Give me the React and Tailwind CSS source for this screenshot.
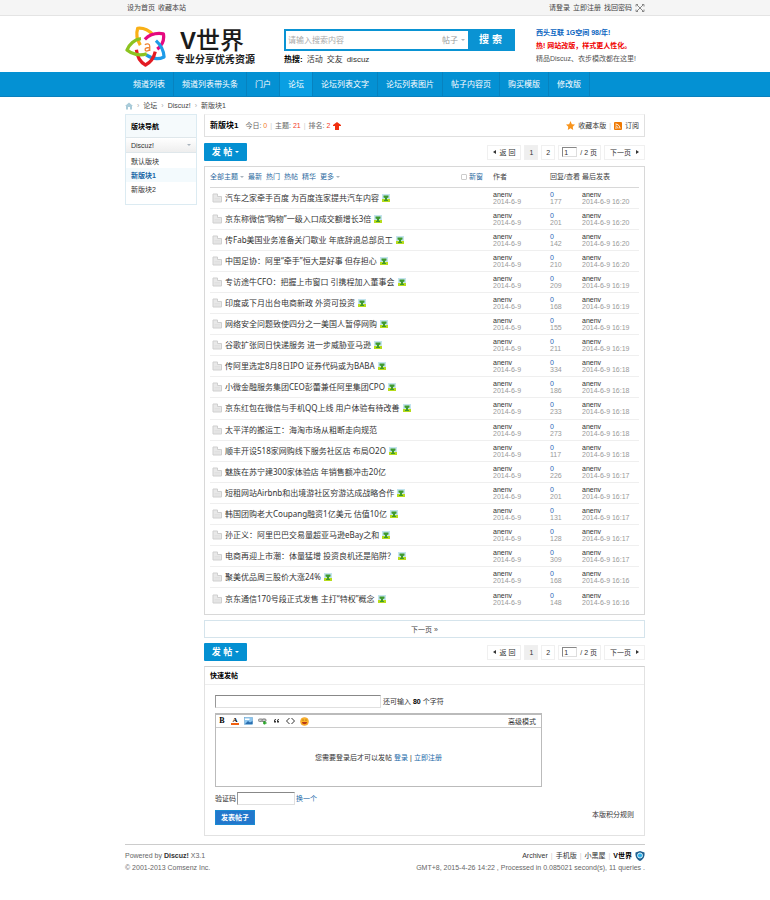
import React from "react";

const navItems = [
  "频道列表",
  "频道列表带头条",
  "门户",
  "论坛",
  "论坛列表文字",
  "论坛列表图片",
  "帖子内容页",
  "购买模版",
  "修改版",
];

const threads = [
  ["汽车之家牵手百度 为百度连家提共汽车内容", 177, "16:20", true],
  ["京东称微信“购物”一级入口成交额增长3倍", 201, "16:20", true],
  ["传Fab美国业务准备关门歇业 年底辞退总部员工", 142, "16:20", true],
  ["中国足协：阿里“牵手”恒大是好事 但存担心", 210, "16:20", true],
  ["专访途牛CFO：把握上市窗口 引携程加入董事会", 209, "16:19", true],
  ["印度或下月出台电商新政 外资可投资", 168, "16:19", true],
  ["网络安全问题致使四分之一美国人暂停网购", 155, "16:19", true],
  ["谷歌扩张同日快递服务 进一步威胁亚马逊", 211, "16:19", true],
  ["传阿里选定8月8日IPO 证券代码或为BABA", 334, "16:18", true],
  ["小微金融服务集团CEO彭蕾兼任阿里集团CPO", 186, "16:18", true],
  ["京东红包在微信与手机QQ上线 用户体验有待改善", 233, "16:18", true],
  ["太平洋的搬运工：海淘市场从粗断走向规范", 273, "16:18", false],
  ["顺丰开设518家网购线下服务社区店 布局O2O", 117, "16:18", true],
  ["魅族在苏宁建300家体验店 年销售额冲击20亿", 226, "16:17", false],
  ["短租网站Airbnb和出境游社区穷游达成战略合作", 201, "16:17", true],
  ["韩国团购老大Coupang融资1亿美元 估值10亿", 131, "16:17", true],
  ["孙正义：阿里巴巴交易量超亚马逊eBay之和", 128, "16:17", true],
  ["电商再迎上市潮：体量猛增 投资良机还是陷阱？", 309, "16:17", true],
  ["聚美优品周三股价大涨24%", 168, "16:16", true],
  ["京东通信170号段正式发售 主打“特权”概念", 148, "16:16", true],
];

function Wrap({ className = "", children }) {
  return <div className={`mx-auto w-full max-w-[520px] ${className}`}>{children}</div>;
}

function FlowerLogo() {
  return (
    <svg viewBox="13 14 126 124" className="h-[41px] w-[41px] shrink-0" fill="none" strokeWidth="10" strokeLinejoin="round" aria-hidden="true">
      <path d="M60 72C50 56 47 36 52 20C70 18 90 26 100 42" stroke="#f9b016" />
      <path d="M74 54C90 38 112 34 131 37C134 54 128 72 112 84" stroke="#e5097f" />
      <path d="M108 58C124 72 132 90 133 108C116 116 96 114 78 102" stroke="#1e9be8" />
      <path d="M106 92C102 110 90 126 76 133C60 124 50 106 48 86" stroke="#e31b23" />
      <path d="M80 98C58 106 34 100 19 87C26 70 42 54 62 52" stroke="#8cc320" />
      <path d="M74 71C80 66 89 67 89 75V90M89 79C78 79 74 82 75 87C78 92 86 90 89 85" stroke="#f08334" strokeWidth="4" />
    </svg>
  );
}

function PictureIcon() {
  return (
    <svg viewBox="0 0 16 16" className="inline-block h-2 w-2 align-middle" aria-hidden="true">
      <rect width="16" height="16" fill="#c4e4ee" />
      <path d="M0 10h16v6H0z" fill="#b6dc1c" />
      <path d="M3 3h10v4l-3 1v4h2v2H4v-2h2V8L3 7z" fill="#3f9a2e" />
    </svg>
  );
}

function FolderIcon() {
  return (
    <svg viewBox="0 0 20 20" className="h-[10px] w-[10px]" aria-hidden="true">
      <path d="M2 2h9v5h8v11H2z" fill="#e8e8e8" stroke="#cfcfcf" strokeWidth="2" />
      <path d="M5 11h11M5 14h11" stroke="#d8d8d8" />
    </svg>
  );
}

function PostButton() {
  return (
    <button type="button" className="flex h-[18px] w-[43px] items-center justify-center gap-[3px] rounded-[1px] bg-[#0490d2] text-[9px] leading-none font-bold text-white">
      <span>发 帖</span>
      <span className="h-0 w-0 border-x-2 border-t-2 border-x-transparent border-t-white" />
    </button>
  );
}

function Pager({ id }) {
  const box = "flex h-[15px] items-center border border-[#f0f0f0] leading-none";
  return (
    <nav aria-label="分页" className="flex items-center gap-[3px] text-[#333]">
      <a href="#" className={`${box} gap-1 px-[5px]`}>
        <span className="h-0 w-0 border-y-2 border-r-[3px] border-y-transparent border-r-[#333]" />
        返 回
      </a>
      <a href="#" className={`${box} bg-[#efefef] px-1`}>1</a>
      <a href="#" className={`${box} px-1`}>2</a>
      <span className={`${box} gap-[3px] px-[3px]`}>
        <input id={id} aria-label="页码" defaultValue="1" className="h-[10px] w-[15px] border border-[#ddd] border-t-[#888] border-l-[#888] px-px leading-none" />
        <label htmlFor={id}>/ 2 页</label>
      </span>
      <a href="#" className={`${box} gap-[5px] px-[5px]`}>
        下一页
        <span className="h-0 w-0 border-y-2 border-l-[3px] border-y-transparent border-l-[#333]" />
      </a>
    </nav>
  );
}

function Caret() {
  return <span className="inline-block h-0 w-0 border-x-2 border-t-2 border-x-transparent border-t-[#a9b4bd] align-middle" />;
}

function Header() {
  return (
    <header>
      <div className="h-4 border-b border-[#e4e4e4] bg-[#f5f5f5]">
        <Wrap className="flex h-[15px] items-center justify-between">
          <div className="flex gap-[3px] pl-[2px]">
            <a href="#">设为首页</a>
            <a href="#">收藏本站</a>
          </div>
          <div className="flex items-center gap-[3px]">
            <a href="#">请登录</a>
            <a href="#">立即注册</a>
            <a href="#">找回密码</a>
            <svg viewBox="0 0 18 16" className="h-2 w-[10px]" fill="none" stroke="#888" strokeWidth="2" aria-hidden="true">
              <path d="M3 2l12 12M15 2L3 14M1 5V1h4M13 1h4v4M1 11v4h4M13 15h4v-4" />
            </svg>
          </div>
        </Wrap>
      </div>
      <Wrap className="flex h-14">
        <div className="flex w-[159px] gap-[9px] pt-[10px] text-[#1b1b1b]">
          <FlowerLogo />
          <div className="flex flex-col">
            <span className="pl-[5px] text-[24px] leading-[29px] font-medium whitespace-nowrap">
              <b>V</b>世界
            </span>
            <span className="text-[10px] leading-[10px] font-bold whitespace-nowrap">专业分享优秀资源</span>
          </div>
        </div>
        <div className="w-[231px] pt-[13px]">
          <form className="flex h-[22px] border-2 border-[#0a93d3] bg-[#0a93d3]" onSubmit={(e) => e.preventDefault()}>
            <input aria-label="搜索" placeholder="请输入搜索内容" className="w-[156px] bg-white px-[2px] text-[8px] placeholder:text-[#aaa]" />
            <span className="flex items-center gap-[3px] bg-white pr-[3px] text-[8px] whitespace-nowrap text-[#999]">
              帖子 <Caret />
            </span>
            <button type="submit" className="flex-1 text-[10px] leading-none font-bold text-white">搜 索</button>
          </form>
          <div className="flex gap-1 pt-[4px] text-[8px] leading-[9px] text-[#333]">
            <strong className="font-bold text-black">热搜:</strong>
            <a href="#">活动</a>
            <a href="#">交友</a>
            <a href="#">discuz</a>
          </div>
        </div>
        <div className="flex flex-col pt-[10px] pl-[21px] leading-[13px] whitespace-nowrap">
          <a href="#" className="font-bold text-[#0a64c0]">西头互联 1G空间 98/年!</a>
          <a href="#" className="font-bold text-[#f00000]">热! 网站改版，样式更人性化。</a>
          <a href="#" className="text-[#555]">精品Discuz、衣步模改都在这里!</a>
        </div>
      </Wrap>
      <nav className="border-b border-[#0a80bd] bg-[#0491d3]">
        <Wrap className="flex h-6 text-[8px] text-white">
          {navItems.map((item, i) => (
            <a
              key={item}
              href="#"
              className={`flex items-center border-r border-[#0782bf] px-2 ${i === 3 ? "bg-[#099fe3]" : ""}`}
            >
              {item}
            </a>
          ))}
        </Wrap>
      </nav>
    </header>
  );
}

function Sidebar() {
  return (
    <aside className="w-[72px] shrink-0 self-start border border-[#dcebf2] text-[#333]">
      <h2 className="flex h-[22px] items-center bg-[#f5fafc] pl-[5px] font-bold text-black">版块导航</h2>
      <div className="flex h-4 items-center justify-between border-y border-[#dfe7eb] bg-gradient-to-b from-white to-[#eeeeee] px-[5px]">
        Discuz!
        <Caret />
      </div>
      <ul className="flex flex-col pt-px pb-2">
        <li className="flex h-[14px] items-center pl-[5px]"><a href="#">默认版块</a></li>
        <li className="flex h-[14px] items-center bg-[#f3fafd] pl-[5px] font-bold text-[#1767a6]"><a href="#">新版块1</a></li>
        <li className="flex h-[14px] items-center pl-[5px]"><a href="#">新版块2</a></li>
      </ul>
    </aside>
  );
}

function ForumTitle() {
  return (
    <div className="flex h-[23px] items-center justify-between border border-[#e0e0e0] border-t-[#f2f2f2] px-[5px]">
      <div className="flex items-center gap-[7px]">
        <h1 className="text-[8px] font-bold text-black">新版块1</h1>
        <p className="flex items-center gap-[3px] text-[#666]">
          <span>今日: <b className="font-normal text-[#f27c1f]">0</b></span>
          <span className="text-[#ccc]">|</span>
          <span>主题: <b className="font-normal text-[#f23c1f]">21</b></span>
          <span className="text-[#ccc]">|</span>
          <span>排名: <b className="font-normal text-[#f23c1f]">2</b></span>
          <svg viewBox="0 0 16 16" className="h-2 w-2" fill="#f03010" aria-hidden="true">
            <path d="M8 0l8 6v2h-4v8H4V8H0V6z" />
          </svg>
        </p>
      </div>
      <div className="flex items-center gap-[3px] text-[#333]">
        <svg viewBox="0 0 20 20" className="h-[9px] w-[9px]" fill="#f8941d" aria-hidden="true">
          <path d="M10 0l3 7 7 1-5 5 1 7-6-4-6 4 1-7-5-5 7-1z" />
        </svg>
        <a href="#">收藏本版</a>
        <span className="text-[#ccc]">|</span>
        <svg viewBox="0 0 16 16" className="h-2 w-2" aria-hidden="true">
          <rect width="16" height="16" rx="2" fill="#f07800" />
          <path d="M3 4c5 0 9 4 9 9M3 8c3 0 5 2 5 5" fill="none" stroke="#fff" strokeWidth="2" />
          <circle cx="4" cy="12" r="1.5" fill="#fff" />
        </svg>
        <a href="#">订阅</a>
      </div>
    </div>
  );
}

function ThreadTable() {
  return (
    <section className="border border-[#d8d8d8] px-[5px] pb-[5px]">
      <table className="h-[442px] w-full table-fixed border-collapse">
        <colgroup>
          <col />
          <col className="w-[57px]" />
          <col className="w-[32px]" />
          <col className="w-[57px]" />
        </colgroup>
        <thead>
          <tr className="h-5 text-left text-[#444]">
            <th className="border-b border-[#d8d8d8] p-0 font-normal">
              <div className="flex items-center justify-between pr-[10px] text-[#2b6aa0]">
                <div className="flex items-center gap-1 whitespace-nowrap">
                  <a href="#">全部主题 <Caret /></a>
                  <a href="#">最新</a>
                  <a href="#">热门</a>
                  <a href="#">热帖</a>
                  <a href="#">精华</a>
                  <a href="#">更多 <Caret /></a>
                </div>
                <label className="flex items-center gap-[2px]">
                  <input type="checkbox" className="h-[6px] w-[6px] appearance-none rounded-[1px] border border-[#ccc]" />
                  新窗
                </label>
              </div>
            </th>
            <th className="border-b border-[#d8d8d8] p-0 font-normal">作者</th>
            <th className="border-b border-[#d8d8d8] p-0 font-normal whitespace-nowrap">回复/查看</th>
            <th className="border-b border-[#d8d8d8] p-0 font-normal">最后发表</th>
          </tr>
        </thead>
        <tbody>
          {threads.map(([title, views, time, pic], i) => (
            <tr key={title} className={`h-[21px] leading-[7px] text-[#999] ${i < threads.length - 1 ? "border-b border-[#efefef]" : ""}`}>
              <td className="p-0">
                <div className="flex items-center gap-[3px] pl-[2px] font-['Noto_Sans','Noto_Sans_CJK_SC',sans-serif] text-[8px] leading-none whitespace-nowrap text-[#333]">
                  <FolderIcon />
                  <a href="#">{title}</a>
                  {pic && <PictureIcon />}
                </div>
              </td>
              <td className="p-0">
                <a href="#" className="block text-[#333]">anenv</a>
                2014-6-9
              </td>
              <td className="p-0">
                <a href="#" className="block text-[#2b65b7]">0</a>
                {views}
              </td>
              <td className="p-0 whitespace-nowrap">
                <a href="#" className="block text-[#333]">anenv</a>
                2014-6-9 {time}
              </td>
            </tr>
          ))}
        </tbody>
      </table>
    </section>
  );
}

function EditorIcons() {
  return (
    <div className="flex items-center gap-[5px]">
      <button type="button" className="w-[8px] font-['Liberation_Serif',serif] text-[8px] leading-none font-bold text-black">B</button>
      <button type="button" aria-label="文字颜色" className="w-[8px] border-b-2 border-[#f06010] font-['Liberation_Serif',serif] text-[7px] leading-[6px] font-bold text-black">A</button>
      <button type="button" aria-label="图片">
        <svg viewBox="0 0 18 16" className="h-2 w-[9px]">
          <rect x="1" y="1" width="16" height="14" fill="#8cc6f0" stroke="#5a9bcc" />
          <path d="M2 14l6-6 4 3 5-3v6z" fill="#2a6eb0" />
          <path d="M2 3h9v3H2z" fill="#fff" />
        </svg>
      </button>
      <button type="button" aria-label="链接">
        <svg viewBox="0 0 18 16" className="h-2 w-[9px]" fill="none" strokeWidth="2">
          <rect x="1" y="4" width="8" height="5" rx="2" fill="#ccc" stroke="#888" />
          <rect x="8" y="4" width="8" height="5" rx="2" fill="#ccc" stroke="#777" />
          <path d="M13 8v7M10 12h7" stroke="#2aa52a" strokeWidth="3" />
        </svg>
      </button>
      <button type="button" aria-label="引用">
        <svg viewBox="0 0 18 16" className="h-2 w-[9px]" fill="#333">
          <path d="M8 4c-3 0-4 2-4 4v3h4V8H6c0-1 1-2 2-2zM14 4c-3 0-4 2-4 4v3h4V8h-2c0-1 1-2 2-2z" />
        </svg>
      </button>
      <button type="button" aria-label="代码">
        <svg viewBox="0 0 18 16" className="h-2 w-[9px]" fill="none" stroke="#333" strokeWidth="2">
          <path d="M7 2L1 8l6 6M11 2l6 6-6 6" />
        </svg>
      </button>
      <button type="button" aria-label="表情">
        <svg viewBox="0 0 18 18" className="h-[9px] w-[9px]">
          <circle cx="9" cy="9" r="8" fill="#fbb42a" stroke="#ec9420" />
          <path d="M4 10h10c0 6-10 6-10 0z" fill="#b83a18" />
          <circle cx="6" cy="6" r="1" fill="#5a2a00" />
          <circle cx="12" cy="6" r="1" fill="#5a2a00" />
        </svg>
      </button>
    </div>
  );
}

function QuickPost() {
  const field = "border border-[#e0e0e0] border-t-[#888] border-l-[#999] px-1";
  return (
    <section className="border border-[#e2e2e2] border-t-[#cfcfcf] text-[#333]">
      <h2 className="flex h-[18px] items-center border-b border-[#eee] pl-[5px] font-bold text-black">快速发帖</h2>
      <form className="px-[10px] pt-[10px] pb-[10px]" onSubmit={(e) => e.preventDefault()}>
        <div className="flex items-center gap-[2px]">
          <input id="subject" className={`${field} h-[13px] w-[166px]`} />
          <label htmlFor="subject">还可输入 <b className="text-black">80</b> 个字符</label>
        </div>
        <div className="mt-[5px] max-w-[327px] border border-[#bbb] border-t-2">
          <div className="flex h-[13px] items-center justify-between border-b border-[#ccc] pr-[5px] pl-[2px]">
            <EditorIcons />
            <a href="#">高级模式</a>
          </div>
          <div className="flex h-[58px] items-center justify-center gap-[2px]">
            <span>您需要登录后才可以发帖</span>
            <a href="#" className="text-[#2069a8]">登录</a>|
            <a href="#" className="text-[#2069a8]">立即注册</a>
          </div>
        </div>
        <div className="flex items-center gap-[1px] pt-[5px]">
          <label htmlFor="captcha">验证码</label>
          <input id="captcha" className={`${field} h-[13px] w-[58px]`} />
          <a href="#" className="text-[#2069a8]">换一个</a>
        </div>
        <div className="flex items-start justify-between pt-[5px]">
          <button type="submit" className="h-[15px] w-10 border border-[#1a8ad2] bg-[#2277cc] leading-none font-bold text-white">发表帖子</button>
          <a href="#">本版积分规则</a>
        </div>
      </form>
    </section>
  );
}

export default function App() {
  return (
    <div className="min-h-screen bg-white font-['Liberation_Sans','Noto_Sans_CJK_SC',sans-serif] text-[7px] leading-[9px] text-[#444]">
      <Header />
      <Wrap className="flex h-[17px] items-center gap-1">
        <svg viewBox="0 0 16 16" className="h-2 w-2" fill="#a9cbd9" aria-hidden="true">
          <path d="M8 1l8 7h-2v7h-4v-5H6v5H2V8H0z" />
        </svg>
        <span className="text-[#aaa]">›</span>
        <a href="#">论坛</a>
        <span className="text-[#aaa]">›</span>
        <a href="#">Discuz!</a>
        <span className="text-[#aaa]">›</span>
        <a href="#">新版块1</a>
      </Wrap>
      <Wrap className="flex gap-[7px]">
        <Sidebar />
        <main className="min-w-0 flex-1">
          <ForumTitle />
          <div className="flex h-[29px] items-center justify-between pt-px">
            <PostButton />
            <Pager id="page-top" />
          </div>
          <ThreadTable />
          <a href="#" className="mt-[5px] flex h-[18px] items-center justify-center border border-[#d5e4ec]">下一页 »</a>
          <div className="flex h-7 items-center justify-between">
            <PostButton />
            <Pager id="page-bottom" />
          </div>
          <QuickPost />
        </main>
      </Wrap>
      <Wrap className="pt-2">
        <footer className="flex justify-between border-t border-[#ccc] pt-[5px] leading-[12px] text-[#666]">
          <div>
            <p>Powered by <b className="text-[#333]">Discuz!</b> X3.1</p>
            <p>© 2001-2013 Comsenz Inc.</p>
          </div>
          <div className="flex flex-col items-end">
            <p className="flex items-center gap-[3px] text-[#333]">
              <a href="#">Archiver</a>
              <span className="text-[#ccc]">|</span>
              <a href="#">手机版</a>
              <span className="text-[#ccc]">|</span>
              <a href="#">小黑屋</a>
              <span className="text-[#ccc]">|</span>
              <a href="#" className="font-bold text-black">V世界</a>
              <svg viewBox="0 0 20 20" className="h-[10px] w-[10px]" aria-hidden="true">
                <path d="M1 3l9-3 9 3c1 9-3 14-9 17C4 17 0 12 1 3z" fill="#1f5f8f" />
                <circle cx="10" cy="9" r="5" fill="#2cb0ea" stroke="#d5f0fb" strokeWidth="2" />
              </svg>
            </p>
            <p>GMT+8, 2015-4-26 14:22 , Processed in 0.085021 second(s), 11 queries .</p>
          </div>
        </footer>
      </Wrap>
    </div>
  );
}
